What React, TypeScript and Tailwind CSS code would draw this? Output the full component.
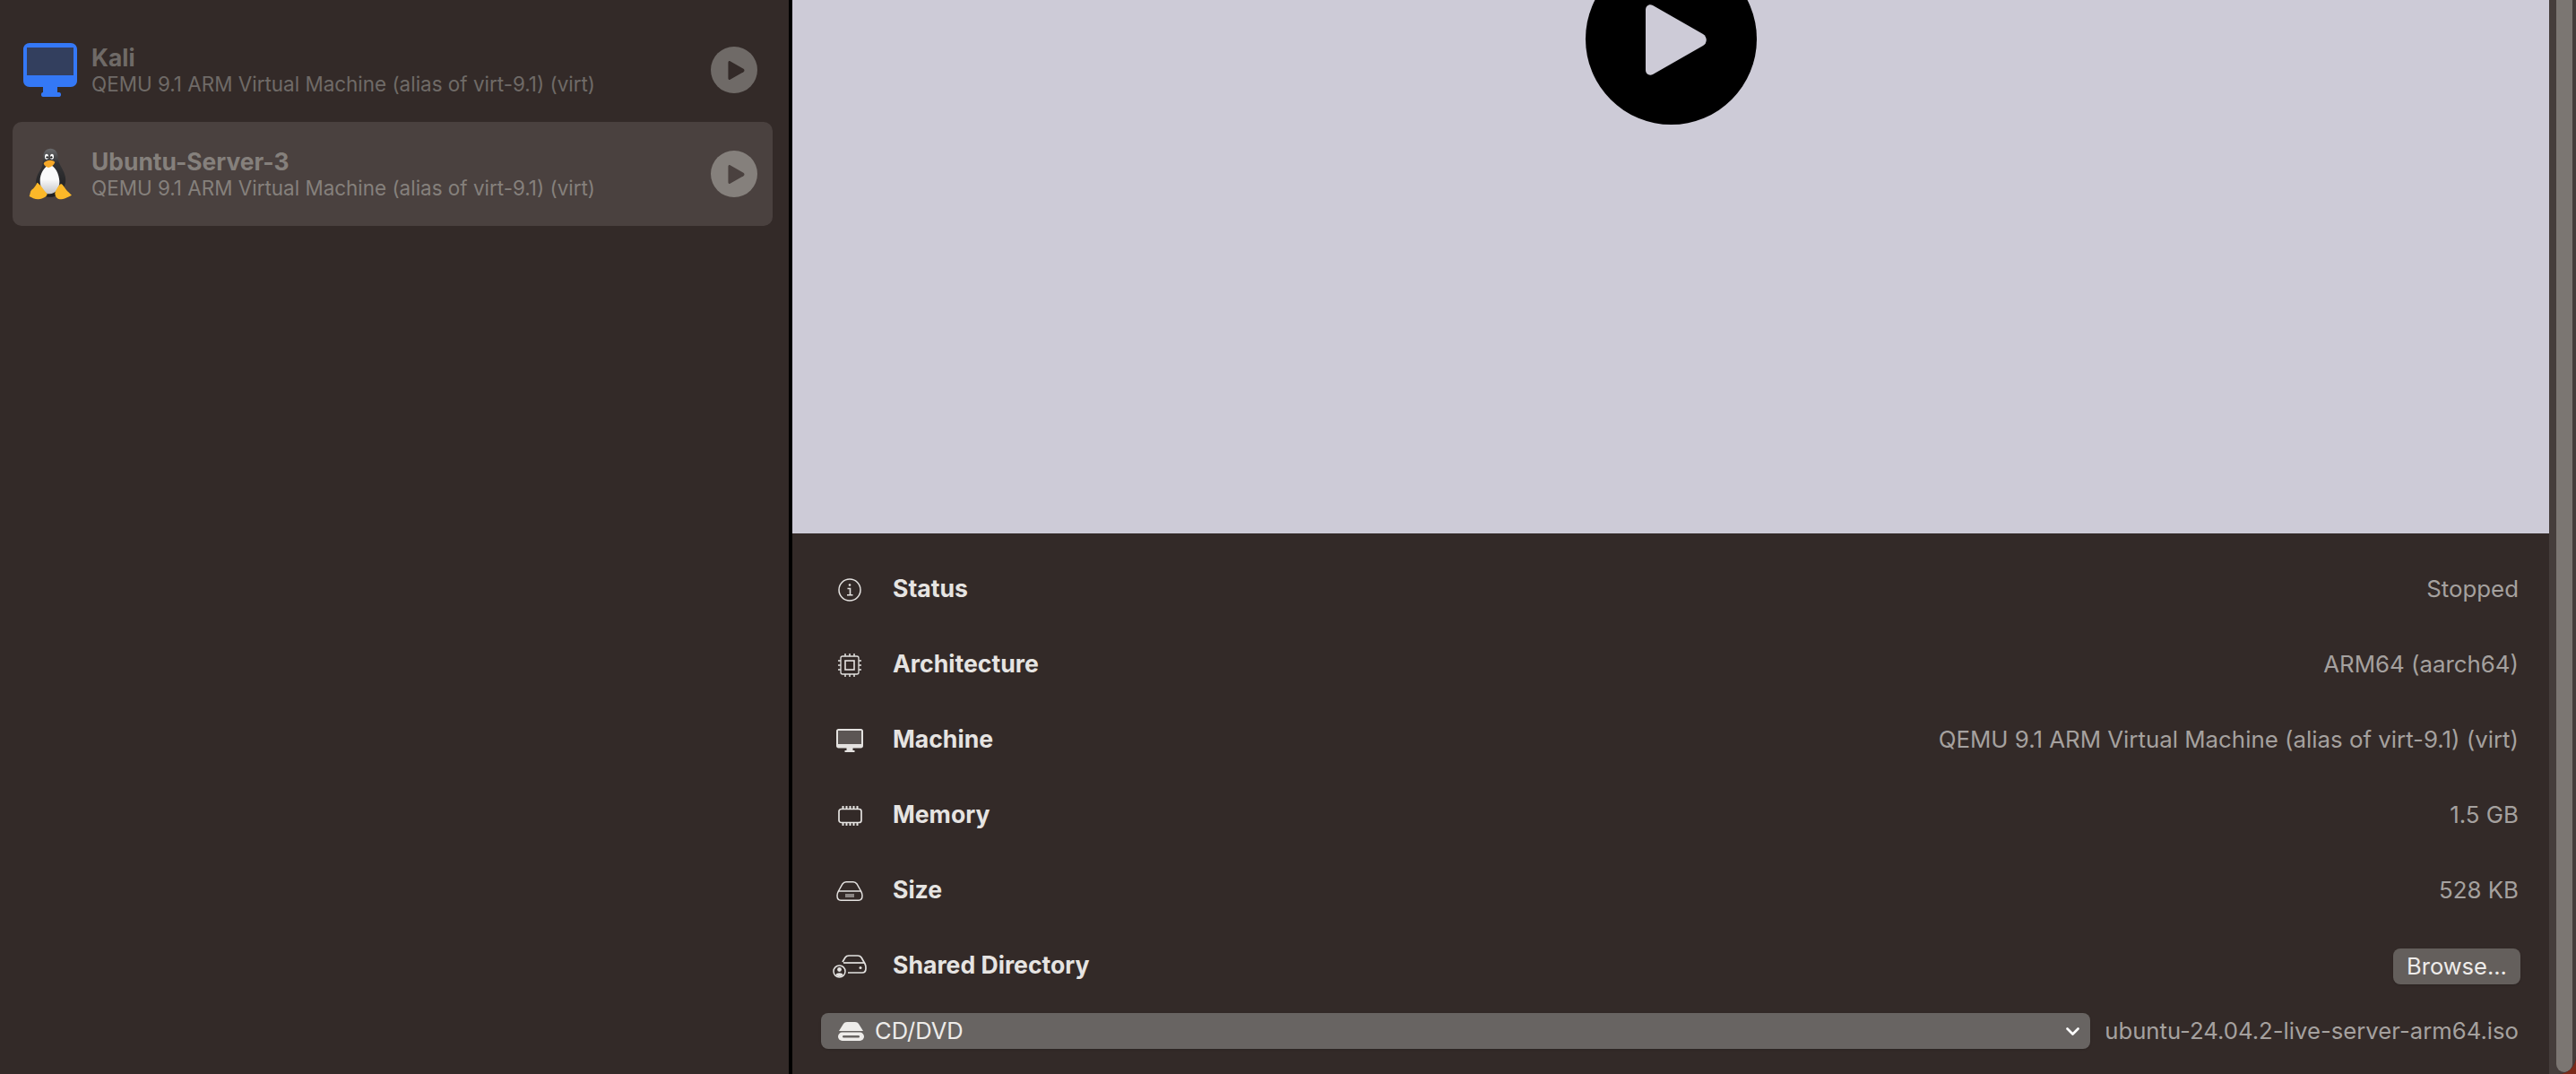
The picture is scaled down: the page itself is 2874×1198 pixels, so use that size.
import React from 'react';

const PlayGlyph = ({ className }: { className?: string }) => (
  <svg viewBox="0 0 68 79" className={className} fill="currentColor">
    <path d="M0 6C0 1.5 4 -1 8 1L64 33C69 36 69 43 64 46L8 78C4 80 0 77.500 0 73Z" />
  </svg>
);

const MonitorBlue = () => (
  <svg viewBox="0 0 60 60" className="w-[60px] h-[60px]">
    <path d="M7 0H53C57 0 60 3 60 7V42C60 46 57 49 53 49H38V55H40C41.500 55 42 56 42 57.500C42 59 41.500 60 40 60H22C20.500 60 20 59 20 57.500C20 56 20.500 55 22 55H22V49H7C3 49 0 46 0 42V7C0 3 3 0 7 0Z" fill="#3478f6" />
    <rect x="4" y="5" width="52" height="31" fill="#333f5e" />
  </svg>
);

const Penguin = () => (
  <svg viewBox="0 0 168 186" className="w-[56px] h-[62px]">
    <defs>
      <linearGradient id="penguinBody" x1="0" y1="0" x2="0" y2="1">
        <stop offset="0" stopColor="#6a6a6c" />
        <stop offset="0.3" stopColor="#333335" />
        <stop offset="1" stopColor="#1e1e20" />
      </linearGradient>
      <linearGradient id="penguinBelly" x1="0" y1="0" x2="0" y2="1">
        <stop offset="0.5" stopColor="#fafafa" />
        <stop offset="1" stopColor="#c4c4c6" />
      </linearGradient>
    </defs>
    <path d="M85 8C100 8 110 20 110 38C110 55 122 68 130 88C138 108 138 125 128 140C118 165 100 170 85 170C65 170 50 165 40 140C32 120 38 100 50 82C58 70 60 55 60 38C60 20 70 8 85 8Z" fill="url(#penguinBody)" />
    <path d="M82 62C100 66 114 92 115 118C116 142 100 160 82 160C64 160 50 142 50 116C50 92 64 68 82 62Z" fill="url(#penguinBelly)" />
    <ellipse cx="72" cy="35" rx="6" ry="9" fill="#fff" />
    <ellipse cx="90" cy="35" rx="6" ry="9" fill="#fff" />
    <circle cx="74" cy="37" r="3.500" fill="#111" />
    <circle cx="88" cy="37" r="3.500" fill="#111" />
    <path d="M62 58C68 46 92 44 100 54C96 64 88 70 78 72C70 70 64 66 62 58Z" fill="#f7a928" />
    <path d="M40 122C50 126 62 146 74 160C74 168 62 176 44 178C32 178 22 172 14 168C18 158 16 152 22 146C30 140 36 132 40 122Z" fill="#fbb829" />
    <path d="M120 126C126 128 130 136 136 144C142 152 150 158 156 164C146 170 130 178 116 178C106 176 100 168 100 156C104 148 110 132 120 126Z" fill="#fbb829" />
  </svg>
);

const InfoIcon = () => (
  <svg viewBox="0 0 26 26" className="w-[26px] h-[26px]" fill="none" stroke="#e4e2e0" strokeWidth="1.500">
    <circle cx="13" cy="13" r="12" />
    <path d="M10.500 11.500H13.500V18.500M10 18.700H16.500" strokeWidth="1.600" />
    <circle cx="13" cy="7.500" r="1.300" fill="#e4e2e0" stroke="none" />
  </svg>
);

const CpuIcon = () => (
  <svg viewBox="0 0 26 26" className="w-[26px] h-[26px]" fill="none" stroke="#e4e2e0" strokeWidth="1.300">
    <rect x="3" y="3" width="20" height="20" rx="2" />
    <rect x="8" y="8" width="10" height="10" strokeWidth="1.600" />
    <path d="M8 0V3M13 0V3M18 0V3M8 23V26M13 23V26M18 23V26M0 8H3M0 13H3M0 18H3M23 8H26M23 13H26M23 18H26" strokeWidth="1.500" />
  </svg>
);

const MonitorIcon = () => (
  <svg viewBox="0 0 30 26" className="w-[30px] h-[26px]">
    <path d="M2.500 0H27.500C29 0 30 1 30 2.500V19C30 20.500 29 21.500 27.500 21.500H18.500V24H20.500V26H9.500V24H11.500V21.500H2.500C1 21.500 0 20.500 0 19V2.500C0 1 1 0 2.500 0Z" fill="#e4e2e0" />
    <rect x="2" y="2" width="26" height="15" fill="#5c5654" />
  </svg>
);

const MemoryIcon = () => (
  <svg viewBox="0 0 27 22" className="w-[27px] h-[22px]" fill="none" stroke="#e4e2e0">
    <rect x="1" y="3.500" width="25" height="15" rx="2.500" strokeWidth="1.700" />
    <path d="M5.500 0V3.500M9.500 0V3.500M13.500 0V3.500M17.500 0V3.500M21.500 0V3.500M5.500 18.500V22M9.500 18.500V22M13.500 18.500V22M17.500 18.500V22M21.500 18.500V22" strokeWidth="2" />
  </svg>
);

const DriveIcon = () => (
  <svg viewBox="0 0 30 22" className="w-[30px] h-[22px]" fill="none" stroke="#e4e2e0" strokeWidth="1.500">
    <path d="M1 16C1 13 2 12 3 10L7 3C8 1.500 9 0.800 11 0.800H19C21 0.800 22 1.500 23 3L27 10C28 12 29 13 29 16C29 19 27.500 21.200 25 21.200H5C2.500 21.200 1 19 1 16Z" />
    <path d="M2 11H28" />
    <path d="M11 14V18M13 14V18M15 14V18M17 14V18M19 14V18" strokeWidth="1" />
  </svg>
);

const SharedIcon = () => (
  <svg viewBox="0 0 38 26" className="w-[38px] h-[26px]" fill="none" stroke="#e4e2e0" strokeWidth="1.700">
    <path d="M11 8L14 3C15 1.500 16 1 18 1H28C30 1 31 1.500 32 3L36 10C37 12 37 13 37 15C37 18 35.500 20 33 20H17" />
    <path d="M12 9H36" />
    <circle cx="31" cy="14.500" r="1.500" fill="#e4e2e0" stroke="none" />
    <circle cx="7.500" cy="18.500" r="6.500" strokeWidth="1.500" />
    <circle cx="7.500" cy="16.500" r="2.400" fill="#e4e2e0" stroke="none" />
    <path d="M3.500 22.500C4 19.500 11 19.500 11.500 22.500C9.500 24.500 5.500 24.500 3.500 22.500Z" fill="#e4e2e0" stroke="none" />
  </svg>
);

const DiscDriveIcon = () => (
  <svg viewBox="0 0 29 21" className="w-[29px] h-[21px]">
    <path d="M1 10L6 2C7 0.700 8 0 10 0H19C21 0 22 0.700 23 2L28 10Z" fill="#eeecea" />
    <rect x="0" y="11.500" width="29" height="9.500" rx="4.700" fill="#eeecea" />
    <rect x="5" y="15" width="19" height="2.500" rx="1.200" fill="#686462" />
  </svg>
);

const machines = [
  { name: 'Kali', icon: <MonitorBlue />, selected: false },
  { name: 'Ubuntu-Server-3', icon: <Penguin />, selected: true },
];

const details = [
  { label: 'Status', value: 'Stopped', icon: <InfoIcon /> },
  { label: 'Architecture', value: 'ARM64 (aarch64)', icon: <CpuIcon /> },
  { label: 'Machine', value: 'QEMU 9.1 ARM Virtual Machine (alias of virt-9.1) (virt)', icon: <MonitorIcon /> },
  { label: 'Memory', value: '1.5 GB', icon: <MemoryIcon /> },
  { label: 'Size', value: '528 KB', icon: <DriveIcon /> },
];

export default function App() {
  return (
    <div className="w-[2874px] h-[1198px] bg-[#7a2a1a] font-['Inter','Liberation_Sans',sans-serif]">
      <div className="w-full h-full flex overflow-hidden rounded-br-[20px] bg-[#332a28]">
        <aside className="w-[880px] shrink-0 pt-[20px] pl-[14px] pr-[18px]">
          {machines.map((m) => (
            <div
              key={m.name}
              className={`h-[116px] flex items-center pl-[12px] pr-[17px] rounded-[10px] ${m.selected ? 'bg-[#4a413f] text-[#85807c]' : 'text-[#6f6a67]'}`}
            >
              <div className="w-[60px] flex justify-center shrink-0">{m.icon}</div>
              <div className="ml-[16px] flex-1 min-w-0">
                <div className="text-[26.4px] leading-[32px] font-bold">{m.name}</div>
                <div className="text-[22.45px] leading-[28px]">QEMU 9.1 ARM Virtual Machine (alias of virt-9.1) (virt)</div>
              </div>
              <div className={`w-[52px] h-[52px] rounded-full flex items-center justify-center ${m.selected ? 'bg-[#85807c] text-[#4a413f]' : 'bg-[#6f6a67] text-[#332a28]'}`}>
                <PlayGlyph className="w-[19px] h-[21px] ml-[4px]" />
              </div>
            </div>
          ))}
        </aside>

        <main className="flex-1 flex flex-col border-l-[4px] border-black min-w-0">
          <div className="h-[595px] shrink-0 bg-[#cdcbd7] overflow-hidden flex justify-center">
            <div className="w-[191px] h-[191px] -mt-[52px] rounded-full bg-black flex items-center justify-center text-[#cdcbd7]">
              <PlayGlyph className="w-[68px] h-[79px] ml-[12px] mt-[1px]" />
            </div>
          </div>

          <div className="pt-[21px] pl-[32px] pr-[34px]">
            {details.map((d) => (
              <div key={d.label} className="h-[84px] flex items-center">
                <div className="w-[64px] flex justify-center shrink-0">{d.icon}</div>
                <div className="ml-[16px] pb-[3px] text-[26.6px] font-bold text-[#e6e4e2]">{d.label}</div>
                <div className="ml-auto pb-[1px] text-[25.85px] text-[#a5a19f]">{d.value}</div>
              </div>
            ))}
            <div className="h-[84px] flex items-center">
              <div className="w-[64px] flex justify-center shrink-0"><SharedIcon /></div>
              <div className="ml-[16px] pb-[3px] text-[26.6px] font-bold text-[#e6e4e2]">Shared Directory</div>
              <button className="ml-auto -mr-[2px] w-[142px] h-[40px] rounded-[8px] bg-[#645f5c] text-[25.5px] leading-[40px] text-[#eeecea] shadow-sm">
                Browse...
              </button>
            </div>
            <div className="mt-[10px] flex items-center">
              <div className="w-[1416px] h-[40px] shrink-0 rounded-[8px] bg-[#686462] shadow-sm flex items-center pl-[19px] pr-[12px] text-[#eeecea]">
                <DiscDriveIcon />
                <span className="ml-[12px] text-[25.5px] leading-[40px]">CD/DVD</span>
                <svg viewBox="0 0 15 9" className="ml-auto w-[15px] h-[9px]" fill="none" stroke="#fff" strokeWidth="2.600" strokeLinecap="round" strokeLinejoin="round">
                  <path d="M1.500 1.500L7.500 7.500L13.500 1.500" />
                </svg>
              </div>
              <div className="ml-auto text-[25.7px] text-[#a5a19f] whitespace-nowrap">ubuntu-24.04.2-live-server-arm64.iso</div>
            </div>
          </div>
        </main>

        <div className="w-[30px] shrink-0 bg-[#453d3b] pl-[8px] pr-[4px] pb-[2px]">
          <div className="h-full w-[18px] rounded-b-[9px] bg-[#7b7672]" />
        </div>
      </div>
    </div>
  );
}
